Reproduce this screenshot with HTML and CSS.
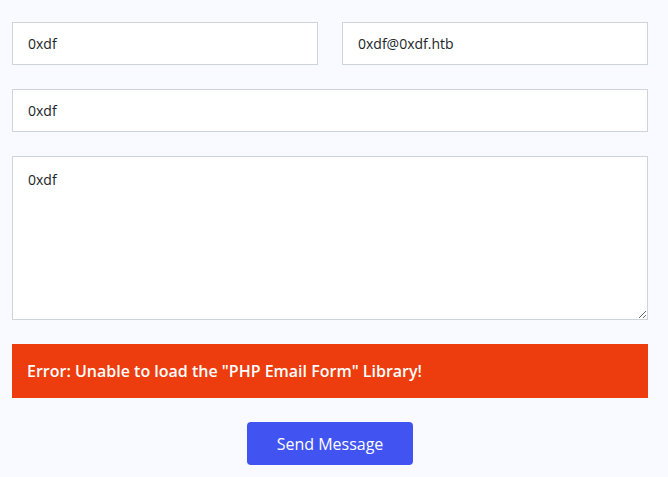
FILE: index.html
```html
<!DOCTYPE html>
<html>
<head>
<meta charset="utf-8">
<link rel="stylesheet" href="styles.css">
</head>
<body>
<form class="email-form">
  <div class="row two">
    <input class="field" type="text" value="0xdf">
    <input class="field" type="email" value="0xdf@0xdf.htb">
  </div>
  <input class="field" type="text" value="0xdf">
  <textarea class="field area">0xdf</textarea>
  <div class="error-message">Error: Unable to load the "PHP Email Form" Library!</div>
  <div class="actions"><button type="submit" class="send">Send Message</button></div>
</form>
</body>
</html>
```
FILE: styles.css
```css
html, body {
  margin: 0;
  padding: 0;
  background: #f8faff;
}
body {
  font-family: "Open Sans", "Liberation Sans", sans-serif;
  color: #444;
}
.email-form {
  width: 636px;
  margin: 0 0 0 12px;
  padding-top: 22px;
  display: flex;
  flex-direction: column;
  gap: 24px;
}
.row.two {
  display: grid;
  grid-template-columns: 1fr 1fr;
  gap: 24px;
}
.field {
  display: block;
  box-sizing: border-box;
  width: 100%;
  height: 43px;
  margin: 0;
  padding: 10px 15px;
  font-family: "Open Sans", "Liberation Sans", sans-serif;
  font-size: 14px;
  line-height: 21px;
  color: #212529;
  background: #fff;
  border: 1px solid #ced4da;
  border-radius: 0;
  outline: none;
}
.area {
  height: 164px;
  padding: 12px 15px;
  resize: vertical;
}
.error-message {
  background: #ed3c0d;
  color: #fff;
  font-weight: 600;
  font-size: 16px;
  line-height: 24px;
  padding: 15px;
}
.actions {
  display: flex;
  justify-content: center;
}
.send {
  background: #4154f1;
  border: 0;
  color: #fff;
  font-family: "Open Sans", "Liberation Sans", sans-serif;
  font-size: 16px;
  line-height: 24px;
  padding: 10px 30px;
  border-radius: 4px;
  height: 43px;
}
```
